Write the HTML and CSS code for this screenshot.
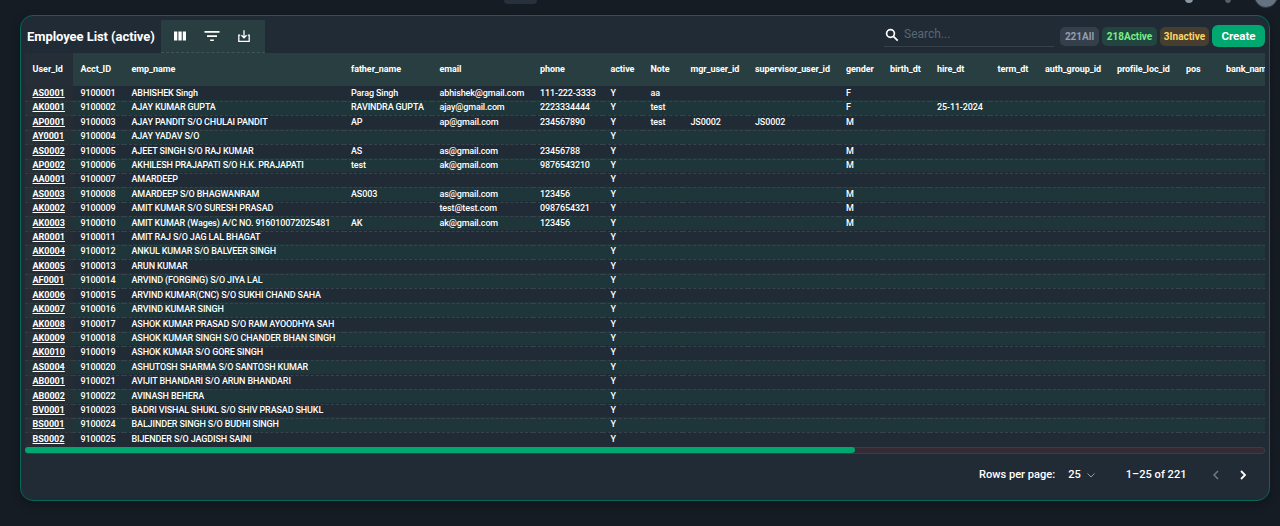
FILE: index.html
```html
<!DOCTYPE html>
<html lang="en">
<head>
    <meta charset="UTF-8">
    <meta name="viewport" content="width=device-width, initial-scale=1.0">
    <title>Employee List</title>
    <link rel="stylesheet" href="styles.css">
</head>
<body>
    <header class="topbar">
        <span class="topbar-tab"></span>
        <span class="topbar-dot"></span>
        <span class="topbar-dot dim"></span>
        <span class="avatar"></span>
    </header>
    <main class="card">
        <div class="toolbar">
            <h1>Employee List (active)</h1>
            <div class="tools">
                <button type="button" aria-label="Columns">
                    <svg width="14" height="14" viewBox="0 0 14 14"><path d="M1 2.500h3.300v9H1zM5.400 2.500h3.300v9H5.400zM9.800 2.500H13v9H9.800z" fill="currentColor"/></svg>
                </button>
                <button type="button" aria-label="Filter">
                    <svg width="16" height="14" viewBox="0 0 16 14"><path d="M.5 2h15v1.700H.5zM3 6.200h10v1.700H3zM6.200 10.400h3.600v1.700H6.200z" fill="currentColor"/></svg>
                </button>
                <button type="button" aria-label="Download">
                    <svg width="14" height="14" viewBox="0 0 14 14" fill="none" stroke="currentColor" stroke-width="1.3"><path d="M3.200 6.200H1.800v6.200h10.400V6.200h-1.400M7 1.200v7.400M4.400 6.200 7 8.800l2.600-2.600"/></svg>
                </button>
            </div>
            <label class="search">
                <svg width="14" height="14" viewBox="0 0 14 14" fill="none" stroke="currentColor" stroke-width="1.7"><circle cx="5.500" cy="5.500" r="3.900"/><path d="m8.400 8.400 4.300 4.300"/></svg>
                <input type="text" placeholder="Search...">
            </label>
            <div class="chips">
                <span class="chip all">221All</span>
                <span class="chip active">218Active</span>
                <span class="chip inactive">3Inactive</span>
                <button type="button" class="create">Create</button>
            </div>
        </div>
        <div class="grid" id="grid"></div>
        <div class="scrollbar"><div class="thumb"></div></div>
        <footer class="pager">
            <span>Rows per page:</span>
            <span class="page-size">25</span>
            <svg class="caret" width="10" height="8" viewBox="0 0 10 8" fill="none" stroke="currentColor"><path d="M1.500 2.500 5 6l3.500-3.500"/></svg>
            <span class="range">1–25 of 221</span>
            <svg class="prev" width="8" height="12" viewBox="0 0 8 12" fill="none" stroke="currentColor" stroke-width="1.4"><path d="M6 2 2 6l4 4"/></svg>
            <svg class="next" width="8" height="12" viewBox="0 0 8 12" fill="none" stroke="currentColor" stroke-width="1.8"><path d="m2 2 4 4-4 4"/></svg>
        </footer>
    </main>
    <script src="script.js"></script>
</body>
</html>
```
FILE: styles.css
```css
body {
    font-family: Roboto, "Liberation Sans", sans-serif;
    margin: 0;
    height: 526px;
    overflow: hidden;
    background: #161c24;
    color: #fff;
}

h1 {
    margin: 0;
    font-size: 13px;
    font-weight: 700;
    letter-spacing: -0.07px;
    white-space: nowrap;
}

button {
    font-family: inherit;
    border: none;
    background: none;
    color: inherit;
    padding: 0;
    cursor: pointer;
}

svg {
    display: block;
    flex: none;
}

/* bottom edge of the site header */
.topbar {
    display: flex;
    align-items: flex-end;
    height: 8px;
    margin-bottom: 7px;
    padding-left: 504px;
}

.topbar-tab {
    width: 33px;
    height: 4px;
    margin-bottom: 4px;
    border-radius: 0 0 4px 4px;
    background: #28303d;
}

.topbar-dot {
    width: 8px;
    height: 8px;
    margin: 0 0 5.5px 648px;
    border-radius: 50%;
    background: #8b97a4;
}

.topbar-dot.dim {
    width: 6px;
    margin-left: 32px;
    background: #56606b;
}

.avatar {
    width: 22px;
    height: 22px;
    margin-left: 23px;
    border: 1px solid #2c3641;
    border-radius: 50%;
    background: #637381;
}

.card {
    box-sizing: border-box;
    width: 1250px;
    height: 486px;
    margin-left: 20px;
    padding: 4px 4px 0;
    border: 1px solid #05665a;
    border-radius: 13px;
    background: #212b35;
    box-shadow: 0 4px 10px rgba(0, 0, 0, 0.25);
}

.toolbar {
    display: flex;
    height: 33px;
    padding-left: 2px;
}

.toolbar h1 {
    width: 134px;
    line-height: 33px;
}

.tools {
    box-sizing: border-box;
    display: flex;
    width: 104px;
    padding: 0 5px 0 3px;
    background: #293e41;
    border-bottom: 1px dashed #41545a;
}

.tools button {
    display: flex;
    flex: 1;
    align-items: center;
    justify-content: center;
}

.search {
    display: flex;
    gap: 5px;
    box-sizing: border-box;
    width: 170px;
    height: 27px;
    margin-left: 619px;
    padding: 8px 0 0 1px;
    border-bottom: 1px solid #37414c;
}

.search input {
    width: 130px;
    height: 13px;
    margin-top: -1px;
    padding: 0;
    border: none;
    outline: none;
    background: none;
    color: #fff;
    font: 400 12px Roboto, sans-serif;
}

.search input::placeholder {
    color: #5b6673;
}

.chips {
    display: flex;
    gap: 3px;
    margin: 5px 0 0 6px;
}

.chip {
    height: 19px;
    margin-top: 2px;
    border-radius: 5px;
    font-size: 10px;
    font-weight: 700;
    line-height: 19px;
    text-align: center;
}

.chip.all {
    width: 39px;
    background: #343f4b;
    color: #919eab;
}

.chip.active {
    width: 55px;
    background: #22463f;
    color: #77ed8b;
}

.chip.inactive {
    width: 49px;
    background: #463f30;
    color: #ffd666;
}

.create {
    width: 53px;
    height: 22px;
    border-radius: 6px;
    background: #00a76f;
    font-size: 11.5px;
    font-weight: 700;
}

.grid {
    height: 393.5px;
    overflow: hidden;
}

.row {
    display: grid;
    grid-template-columns: 48px 51px 219.5px 88.5px 100.5px 70.5px 40px 40px 64.5px 91px 44px 47px 60.5px 47.5px 72px 69px 40px 56px;
    width: 1250px;
    height: 14.42px;
    font-size: 9px;
    font-weight: 500;
    letter-spacing: -0.13px;
    line-height: 15px;
}

.row span {
    box-sizing: border-box;
    padding-left: 7.5px;
    border-bottom: 1px dashed #37434d;
    white-space: nowrap;
}

.row:nth-child(odd) {
    background: #1e353a;
}

.row .id {
    background: rgba(50, 45, 50, 0.35);
    font-weight: 700;
    letter-spacing: 0;
    text-decoration: underline;
}

.row.head {
    height: 33px;
    background: #293e41;
    letter-spacing: -0.07px;
    line-height: 33px;
}

.row.head span {
    border: none;
    font-weight: 700;
}

.row.head .id {
    background: #252d36;
    text-decoration: none;
}

.scrollbar {
    box-sizing: border-box;
    height: 7px;
    border: 1px solid #3d3b45;
    border-radius: 3px;
    background: #352b34;
}

.thumb {
    width: 830px;
    height: 6px;
    margin: -0.5px 0 0 -1px;
    border-radius: 3px;
    background: #00a76f;
}

.pager {
    display: flex;
    align-items: center;
    justify-content: flex-end;
    height: 42px;
    padding-right: 18px;
    font-size: 11.1px;
    font-weight: 500;
}

.page-size {
    margin-left: 13px;
}

.caret {
    margin-left: 5px;
    color: #919eab;
}

.range {
    margin-left: 30px;
}

.prev {
    margin-left: 25px;
    color: #71808d;
}

.next {
    margin-left: 19.5px;
}
```
FILE: script.js
```js
const columns = ['User_Id', 'Acct_ID', 'emp_name', 'father_name', 'email', 'phone', 'active', 'Note', 'mgr_user_id',
    'supervisor_user_id', 'gender', 'birth_dt', 'hire_dt', 'term_dt', 'auth_group_id', 'profile_loc_id', 'pos', 'bank_name'];

const employees = [
    { User_Id: 'AS0001', emp_name: 'ABHISHEK Singh', father_name: 'Parag Singh', email: 'abhishek@gmail.com', phone: '111-222-3333', Note: 'aa', gender: 'F' },
    { User_Id: 'AK0001', emp_name: 'AJAY KUMAR GUPTA', father_name: 'RAVINDRA GUPTA', email: 'ajay@gmail.com', phone: '2223334444', Note: 'test', gender: 'F', hire_dt: '25-11-2024' },
    { User_Id: 'AP0001', emp_name: 'AJAY PANDIT S/O CHULAI PANDIT', father_name: 'AP', email: 'ap@gmail.com', phone: '234567890', Note: 'test', mgr_user_id: 'JS0002', supervisor_user_id: 'JS0002', gender: 'M' },
    { User_Id: 'AY0001', emp_name: 'AJAY YADAV S/O' },
    { User_Id: 'AS0002', emp_name: 'AJEET SINGH S/O RAJ KUMAR', father_name: 'AS', email: 'as@gmail.com', phone: '23456788', gender: 'M' },
    { User_Id: 'AP0002', emp_name: 'AKHILESH PRAJAPATI S/O H.K. PRAJAPATI', father_name: 'test', email: 'ak@gmail.com', phone: '9876543210', gender: 'M' },
    { User_Id: 'AA0001', emp_name: 'AMARDEEP' },
    { User_Id: 'AS0003', emp_name: 'AMARDEEP S/O BHAGWANRAM', father_name: 'AS003', email: 'as@gmail.com', phone: '123456', gender: 'M' },
    { User_Id: 'AK0002', emp_name: 'AMIT KUMAR S/O SURESH PRASAD', email: 'test@test.com', phone: '0987654321', gender: 'M' },
    { User_Id: 'AK0003', emp_name: 'AMIT KUMAR (Wages) A/C NO. 916010072025481', father_name: 'AK', email: 'ak@gmail.com', phone: '123456', gender: 'M' },
    { User_Id: 'AR0001', emp_name: 'AMIT RAJ S/O JAG LAL BHAGAT' },
    { User_Id: 'AK0004', emp_name: 'ANKUL KUMAR S/O BALVEER SINGH' },
    { User_Id: 'AK0005', emp_name: 'ARUN KUMAR' },
    { User_Id: 'AF0001', emp_name: 'ARVIND (FORGING) S/O JIYA LAL' },
    { User_Id: 'AK0006', emp_name: 'ARVIND KUMAR(CNC) S/O SUKHI CHAND SAHA' },
    { User_Id: 'AK0007', emp_name: 'ARVIND KUMAR SINGH' },
    { User_Id: 'AK0008', emp_name: 'ASHOK KUMAR PRASAD S/O RAM AYOODHYA SAH' },
    { User_Id: 'AK0009', emp_name: 'ASHOK KUMAR SINGH S/O CHANDER BHAN SINGH' },
    { User_Id: 'AK0010', emp_name: 'ASHOK KUMAR S/O GORE SINGH' },
    { User_Id: 'AS0004', emp_name: 'ASHUTOSH SHARMA S/O SANTOSH KUMAR' },
    { User_Id: 'AB0001', emp_name: 'AVIJIT BHANDARI S/O ARUN BHANDARI' },
    { User_Id: 'AB0002', emp_name: 'AVINASH BEHERA' },
    { User_Id: 'BV0001', emp_name: 'BADRI VISHAL SHUKL S/O SHIV PRASAD SHUKL' },
    { User_Id: 'BS0001', emp_name: 'BALJINDER SINGH S/O BUDHI SINGH' },
    { User_Id: 'BS0002', emp_name: 'BIJENDER S/O JAGDISH SAINI' }
];

function renderRow(values, className) {
    const cells = values.map((value, i) => `<span${i === 0 ? ' class="id"' : ''}>${value}</span>`).join('');
    return `<div class="${className}">${cells}</div>`;
}

const rows = employees.map((employee, i) => {
    const record = { Acct_ID: 9100001 + i, active: 'Y', ...employee };
    return renderRow(columns.map(name => record[name] ?? ''), 'row');
});

document.getElementById('grid').innerHTML = renderRow(columns, 'row head') + rows.join('');
```
